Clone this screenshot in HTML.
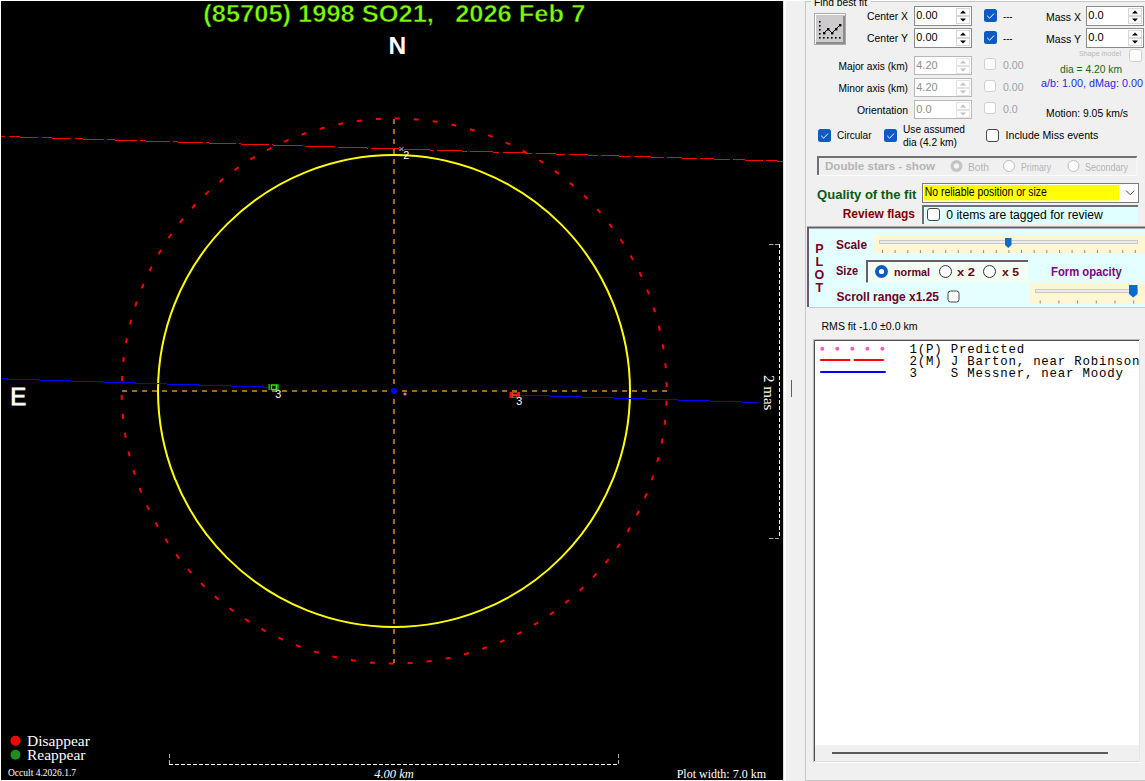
<!DOCTYPE html>
<html><head><meta charset="utf-8">
<style>
*{margin:0;padding:0;box-sizing:border-box}
html,body{width:1145px;height:781px;overflow:hidden;background:#fff;font-family:"Liberation Sans",sans-serif}
#plot{position:absolute;left:0;top:0}
#panel{position:absolute;left:783px;top:0}
</style></head><body>
<svg id="plot" width="783" height="781" viewBox="0 0 783 781"><rect x="0" y="0" width="783" height="781" fill="#fff"/>
<rect x="1" y="1" width="782" height="779" fill="#000"/>
<line x1="122" y1="391" x2="667" y2="391" stroke="#a86a08" stroke-width="2" stroke-dasharray="5 5"/>
<line x1="394" y1="119" x2="394" y2="663" stroke="#a86a08" stroke-width="2" stroke-dasharray="5 5"/>
<circle cx="394" cy="391" r="236" fill="none" stroke="#ffff00" stroke-width="2"/>
<circle cx="394.2" cy="391" r="272.5" fill="none" stroke="#ff0000" stroke-width="2" stroke-dasharray="5 14.02" stroke-dashoffset="-9.9"/>
<line x1="1" y1="136.4" x2="783" y2="161.2" stroke="#ff0000" stroke-width="1" shape-rendering="crispEdges" stroke-dasharray="29.75 3.2" stroke-dashoffset="25.25"/>
<line x1="1" y1="378.80" x2="268.5" y2="387.17" stroke="#0000ff" stroke-width="1" shape-rendering="crispEdges"/>
<line x1="520" y1="395.05" x2="758" y2="402.50" stroke="#0000ff" stroke-width="1" shape-rendering="crispEdges"/>
<g><rect x="268.3" y="384" width="1.8" height="6" fill="#1a9a1a"/><rect x="277" y="384" width="1.8" height="6" fill="#1a9a1a"/><rect x="271.5" y="385" width="4.8" height="4.5" fill="none" stroke="#22ee22" stroke-width="1.4"/></g>
<g><rect x="509.5" y="392" width="2.6" height="6" fill="#ff1010"/><rect x="517.6" y="392" width="2.4" height="6" fill="#ff1010"/><rect x="512" y="394" width="5.6" height="2.2" fill="#ff2020"/><rect x="512.5" y="392.6" width="4.5" height="5" fill="none" stroke="#c05030" stroke-width="0.8"/></g>
<text x="275.2" y="398.4" font-size="10.8" fill="#fff" font-family="Liberation Sans" style="white-space:pre" >3</text>
<text x="516.2" y="405.3" font-size="10.8" fill="#fff" font-family="Liberation Sans" style="white-space:pre" >3</text>
<text x="403.2" y="159.4" font-size="10.8" fill="#fff" font-family="Liberation Sans" style="white-space:pre" >2</text>
<path d="M399.5 147 L403.5 151 M403.5 147 L399.5 151" stroke="#b8b8b8" stroke-width="1"/>
<circle cx="394" cy="391" r="3" fill="#0000ff"/>
<circle cx="405" cy="394" r="1.6" fill="#ff60c0"/>
<text x="203.3" y="21.8" font-size="24" fill="#7cfc00" font-family="Liberation Sans" font-weight="bold" textLength="382" lengthAdjust="spacingAndGlyphs" style="white-space:pre" stroke="#000" stroke-width="0.5">(85705) 1998 SO21,   2026 Feb 7</text>
<text x="397.3" y="53.8" font-size="24.5" fill="#fff" font-family="Liberation Sans" font-weight="bold" text-anchor="middle" style="white-space:pre" >N</text>
<text x="10.2" y="405" font-size="24" fill="#fff" font-family="Liberation Sans" style="white-space:pre" stroke="#fff" stroke-width="0.8">E</text>
<line x1="779.5" y1="244" x2="779.5" y2="538" stroke="#fff" stroke-width="1" stroke-dasharray="4 2"/>
<line x1="769" y1="244.5" x2="779" y2="244.5" stroke="#b0a8b0" stroke-width="1" stroke-dasharray="4.5 1.5"/>
<line x1="769" y1="538.5" x2="779" y2="538.5" stroke="#b0a8b0" stroke-width="1" stroke-dasharray="4.5 1.5"/>
<g transform="translate(764,375) rotate(90)"><text x="0" y="0" font-size="15" fill="#fff" font-family="Liberation Serif" style="white-space:pre" >2 mas</text></g>
<line x1="169" y1="764.5" x2="619" y2="764.5" stroke="#fff" stroke-width="1" stroke-dasharray="4 2"/>
<line x1="169.5" y1="754" x2="169.5" y2="764" stroke="#b0a8b0" stroke-width="1" stroke-dasharray="4 2"/>
<line x1="618.5" y1="754" x2="618.5" y2="764" stroke="#b0a8b0" stroke-width="1" stroke-dasharray="4 2"/>
<text x="394" y="777.7" font-size="12.5" fill="#fff" font-family="Liberation Serif" font-style="italic" text-anchor="middle" style="white-space:pre" >4.00 km</text>
<text x="766" y="777.8" font-size="12" fill="#fff" font-family="Liberation Serif" text-anchor="end" style="white-space:pre" >Plot width: 7.0 km</text>
<text x="8" y="775.5" font-size="10" fill="#fff" font-family="Liberation Serif" textLength="68" lengthAdjust="spacingAndGlyphs" style="white-space:pre" >Occult 4.2026.1.7</text>
<circle cx="15.5" cy="740.7" r="5" fill="#ff0000"/>
<circle cx="15.5" cy="754.7" r="5" fill="#1e8c1e"/>
<text x="27" y="745.7" font-size="15.5" fill="#fff" font-family="Liberation Serif" style="white-space:pre" >Disappear</text>
<text x="27" y="759.7" font-size="15.5" fill="#fff" font-family="Liberation Serif" style="white-space:pre" >Reappear</text></svg>
<svg id="panel" width="362" height="781" viewBox="783 0 362 781"><rect x="783" y="0" width="362" height="781" fill="#f0f0f0"/>
<rect x="783" y="0" width="1" height="781" fill="#dcdcdc"/>
<rect x="784" y="0" width="2" height="781" fill="#ffffff"/>
<rect x="783" y="0" width="362" height="1" fill="#ffffff"/>
<rect x="791" y="380" width="1" height="17" fill="#606060"/>
<rect x="805" y="1" width="1" height="780" fill="#c4c8c4"/>
<rect x="805" y="1" width="340" height="1" fill="#c4c8c4"/>
<rect x="805" y="780" width="340" height="1" fill="#c4c8c4"/>
<rect x="811" y="0" width="60" height="6" fill="#f0f0f0"/>
<text x="814" y="5.6" font-size="11" fill="#000" font-family="Liberation Sans" textLength="53" lengthAdjust="spacingAndGlyphs" style="white-space:pre" >Find best fit</text>
<rect x="814" y="13" width="32" height="32" fill="#a8aca8"/>
<rect x="815" y="14" width="30" height="30" fill="#ffffff"/>
<rect x="816" y="15.5" width="29" height="28.5" fill="#8c8c8c"/>
<rect x="816" y="15.5" width="27" height="26.5" fill="#cdcbcd"/>
<g fill="#000"><rect x="819" y="21" width="1.6" height="1.6"/><rect x="819" y="25" width="1.6" height="1.6"/><rect x="819" y="29" width="1.6" height="1.6"/><rect x="819" y="33" width="1.6" height="1.6"/><rect x="819" y="37" width="1.6" height="1.6"/><rect x="823" y="37" width="1.6" height="1.6"/><rect x="827" y="37" width="1.6" height="1.6"/><rect x="831" y="37" width="1.6" height="1.6"/><rect x="835" y="37" width="1.6" height="1.6"/><rect x="839" y="37" width="1.6" height="1.6"/><rect x="823" y="32" width="2.4" height="2.4"/><rect x="827" y="28" width="2.4" height="2.4"/><rect x="831" y="32" width="2.4" height="2.4"/><rect x="835" y="28" width="2.4" height="2.4"/><rect x="839" y="24" width="2.4" height="2.4"/></g>
<path d="M824 33 L828 29 L832 33 L836 29 L840 25" stroke="#000" stroke-width="1" fill="none"/>
<text x="908" y="20.4" font-size="11" fill="#000" font-family="Liberation Sans" text-anchor="end" textLength="41" lengthAdjust="spacingAndGlyphs" style="white-space:pre" >Center X</text>
<text x="908" y="42.4" font-size="11" fill="#000" font-family="Liberation Sans" text-anchor="end" textLength="41" lengthAdjust="spacingAndGlyphs" style="white-space:pre" >Center Y</text>
<text x="908" y="70.2" font-size="11" fill="#000" font-family="Liberation Sans" text-anchor="end" textLength="69.5" lengthAdjust="spacingAndGlyphs" style="white-space:pre" >Major axis (km)</text>
<text x="908" y="91.9" font-size="11" fill="#000" font-family="Liberation Sans" text-anchor="end" textLength="69.5" lengthAdjust="spacingAndGlyphs" style="white-space:pre" >Minor axis (km)</text>
<text x="908" y="113.8" font-size="11" fill="#000" font-family="Liberation Sans" text-anchor="end" textLength="51" lengthAdjust="spacingAndGlyphs" style="white-space:pre" >Orientation</text>
<rect x="914.5" y="6.5" width="57" height="19" fill="#fff" stroke="#8a8a8a"/>
<text x="916.3" y="18.8" font-size="11.5" fill="#000" font-family="Liberation Sans" textLength="21.2" lengthAdjust="spacingAndGlyphs" style="white-space:pre" >0.00</text>
<rect x="956.5" y="8.5" width="13" height="7" fill="#fff" stroke="#d8d8d8"/>
<rect x="956.5" y="16.5" width="13" height="7" fill="#fff" stroke="#d8d8d8"/>
<path d="M960 13.5 L963 10.5 L966 13.5 Z" fill="#000"/>
<path d="M960 18.5 L963 21.5 L966 18.5 Z" fill="#000"/>
<rect x="914.5" y="28.5" width="57" height="19" fill="#fff" stroke="#8a8a8a"/>
<text x="916.3" y="40.8" font-size="11.5" fill="#000" font-family="Liberation Sans" textLength="21.2" lengthAdjust="spacingAndGlyphs" style="white-space:pre" >0.00</text>
<rect x="956.5" y="30.5" width="13" height="7" fill="#fff" stroke="#d8d8d8"/>
<rect x="956.5" y="38.5" width="13" height="7" fill="#fff" stroke="#d8d8d8"/>
<path d="M960 35.5 L963 32.5 L966 35.5 Z" fill="#000"/>
<path d="M960 40.5 L963 43.5 L966 40.5 Z" fill="#000"/>
<rect x="914.5" y="56.5" width="57" height="18" fill="#fff" stroke="#b8b8b8"/>
<text x="916.3" y="68.8" font-size="11.5" fill="#8c8c8c" font-family="Liberation Sans" textLength="21.2" lengthAdjust="spacingAndGlyphs" style="white-space:pre" >4.20</text>
<rect x="956.5" y="58.5" width="13" height="7" fill="#fff" stroke="#e4e4e4"/>
<rect x="956.5" y="66.5" width="13" height="7" fill="#fff" stroke="#e4e4e4"/>
<path d="M960 63.5 L963 60.5 L966 63.5 Z" fill="#c0c0c0"/>
<path d="M960 68.5 L963 71.5 L966 68.5 Z" fill="#c0c0c0"/>
<rect x="914.5" y="78.5" width="57" height="18" fill="#fff" stroke="#b8b8b8"/>
<text x="916.3" y="90.8" font-size="11.5" fill="#8c8c8c" font-family="Liberation Sans" textLength="21.2" lengthAdjust="spacingAndGlyphs" style="white-space:pre" >4.20</text>
<rect x="956.5" y="80.5" width="13" height="7" fill="#fff" stroke="#e4e4e4"/>
<rect x="956.5" y="88.5" width="13" height="7" fill="#fff" stroke="#e4e4e4"/>
<path d="M960 85.5 L963 82.5 L966 85.5 Z" fill="#c0c0c0"/>
<path d="M960 90.5 L963 93.5 L966 90.5 Z" fill="#c0c0c0"/>
<rect x="914.5" y="100.5" width="57" height="18" fill="#fff" stroke="#b8b8b8"/>
<text x="916.3" y="112.8" font-size="11.5" fill="#8c8c8c" font-family="Liberation Sans" textLength="15.4" lengthAdjust="spacingAndGlyphs" style="white-space:pre" >0.0</text>
<rect x="956.5" y="102.5" width="13" height="7" fill="#fff" stroke="#e4e4e4"/>
<rect x="956.5" y="110.5" width="13" height="7" fill="#fff" stroke="#e4e4e4"/>
<path d="M960 107.5 L963 104.5 L966 107.5 Z" fill="#c0c0c0"/>
<path d="M960 112.5 L963 115.5 L966 112.5 Z" fill="#c0c0c0"/>
<rect x="984" y="9" width="13" height="13" rx="2.5" fill="#0d5bc2"/>
<path d="M987.2 15.8 L989.6 18.2 L994 13.6" stroke="#fff" stroke-width="1" fill="none"/>
<rect x="984" y="31" width="13" height="13" rx="2.5" fill="#0d5bc2"/>
<path d="M987.2 37.8 L989.6 40.2 L994 35.6" stroke="#fff" stroke-width="1" fill="none"/>
<text x="1003" y="19.5" font-size="11" fill="#000" font-family="Liberation Sans" textLength="9.5" lengthAdjust="spacingAndGlyphs" style="white-space:pre" >---</text>
<text x="1003" y="41.5" font-size="11" fill="#000" font-family="Liberation Sans" textLength="9.5" lengthAdjust="spacingAndGlyphs" style="white-space:pre" >---</text>
<rect x="984.5" y="58.5" width="11" height="11" rx="2.5" fill="#fff" stroke="#cfcfcf"/>
<rect x="984.5" y="80.5" width="11" height="11" rx="2.5" fill="#fff" stroke="#cfcfcf"/>
<rect x="984.5" y="102.5" width="11" height="11" rx="2.5" fill="#fff" stroke="#cfcfcf"/>
<text x="1003" y="68.6" font-size="11.5" fill="#a0a0a0" font-family="Liberation Sans" textLength="20.5" lengthAdjust="spacingAndGlyphs" style="white-space:pre" >0.00</text>
<text x="1003" y="90.6" font-size="11.5" fill="#a0a0a0" font-family="Liberation Sans" textLength="20.5" lengthAdjust="spacingAndGlyphs" style="white-space:pre" >0.00</text>
<text x="1003" y="112.6" font-size="11.5" fill="#a0a0a0" font-family="Liberation Sans" textLength="14.8" lengthAdjust="spacingAndGlyphs" style="white-space:pre" >0.0</text>
<text x="1081" y="21" font-size="11" fill="#000" font-family="Liberation Sans" text-anchor="end" textLength="35" lengthAdjust="spacingAndGlyphs" style="white-space:pre" >Mass X</text>
<text x="1081" y="43" font-size="11" fill="#000" font-family="Liberation Sans" text-anchor="end" textLength="35" lengthAdjust="spacingAndGlyphs" style="white-space:pre" >Mass Y</text>
<rect x="1086.5" y="6.5" width="57" height="19" fill="#fff" stroke="#8a8a8a"/>
<text x="1088.3" y="18.8" font-size="11.5" fill="#000" font-family="Liberation Sans" textLength="15.4" lengthAdjust="spacingAndGlyphs" style="white-space:pre" >0.0</text>
<rect x="1128.5" y="8.5" width="13" height="7" fill="#fff" stroke="#d8d8d8"/>
<rect x="1128.5" y="16.5" width="13" height="7" fill="#fff" stroke="#d8d8d8"/>
<path d="M1132 13.5 L1135 10.5 L1138 13.5 Z" fill="#000"/>
<path d="M1132 18.5 L1135 21.5 L1138 18.5 Z" fill="#000"/>
<rect x="1086.5" y="28.5" width="57" height="19" fill="#fff" stroke="#8a8a8a"/>
<text x="1088.3" y="40.8" font-size="11.5" fill="#000" font-family="Liberation Sans" textLength="15.4" lengthAdjust="spacingAndGlyphs" style="white-space:pre" >0.0</text>
<rect x="1128.5" y="30.5" width="13" height="7" fill="#fff" stroke="#d8d8d8"/>
<rect x="1128.5" y="38.5" width="13" height="7" fill="#fff" stroke="#d8d8d8"/>
<path d="M1132 35.5 L1135 32.5 L1138 35.5 Z" fill="#000"/>
<path d="M1132 40.5 L1135 43.5 L1138 40.5 Z" fill="#000"/>
<text x="1079" y="55.6" font-size="8" fill="#b8b8b8" font-family="Liberation Sans" textLength="42" lengthAdjust="spacingAndGlyphs" style="white-space:pre" >Shape model</text>
<rect x="1129.5" y="49.5" width="12" height="12" rx="2.5" fill="#fff" stroke="#cfcfcf"/>
<text x="1060" y="72.5" font-size="11" fill="#0f6a0f" font-family="Liberation Sans" textLength="62" lengthAdjust="spacingAndGlyphs" style="white-space:pre" >dia = 4.20 km</text>
<text x="1041" y="86.7" font-size="11" fill="#2828e0" font-family="Liberation Sans" textLength="102" lengthAdjust="spacingAndGlyphs" style="white-space:pre" >a/b: 1.00, dMag: 0.00</text>
<text x="1046" y="116.5" font-size="11" fill="#000" font-family="Liberation Sans" textLength="82" lengthAdjust="spacingAndGlyphs" style="white-space:pre" >Motion: 9.05 km/s</text>
<rect x="818" y="129" width="13" height="13" rx="2.5" fill="#0d5bc2"/>
<path d="M821.2 135.8 L823.6 138.2 L828 133.6" stroke="#fff" stroke-width="1" fill="none"/>
<text x="837" y="139.4" font-size="11" fill="#000" font-family="Liberation Sans" textLength="34.5" lengthAdjust="spacingAndGlyphs" style="white-space:pre" >Circular</text>
<rect x="884" y="129" width="13" height="13" rx="2.5" fill="#0d5bc2"/>
<path d="M887.2 135.8 L889.6 138.2 L894 133.6" stroke="#fff" stroke-width="1" fill="none"/>
<text x="903" y="132.6" font-size="11" fill="#000" font-family="Liberation Sans" textLength="62" lengthAdjust="spacingAndGlyphs" style="white-space:pre" >Use assumed</text>
<text x="903" y="145.7" font-size="11" fill="#000" font-family="Liberation Sans" textLength="54" lengthAdjust="spacingAndGlyphs" style="white-space:pre" >dia (4.2 km)</text>
<rect x="986.5" y="129.5" width="12" height="12" rx="2.5" fill="#fff" stroke="#464646"/>
<text x="1005.6" y="139.4" font-size="11" fill="#000" font-family="Liberation Sans" textLength="92.7" lengthAdjust="spacingAndGlyphs" style="white-space:pre" >Include Miss events</text>
<rect x="817" y="156" width="320" height="20" fill="#f0f0f0"/>
<path d="M818 175 V157 H1137" stroke="#707070" stroke-width="2" fill="none"/>
<path d="M1137 157 V175.5 H817" stroke="#fcfcfc" stroke-width="1" fill="none"/>
<text x="825" y="169.7" font-size="11.5" fill="#b4b4b4" font-family="Liberation Sans" font-weight="bold" textLength="110" lengthAdjust="spacingAndGlyphs" style="white-space:pre" >Double stars - show</text>
<circle cx="956.5" cy="166" r="6" fill="#c4c4c4"/>
<circle cx="956.5" cy="166" r="2.7" fill="#f4f4f4"/>
<text x="968" y="170.5" font-size="11" fill="#b4b4b4" font-family="Liberation Sans" textLength="21" lengthAdjust="spacingAndGlyphs" style="white-space:pre" >Both</text>
<circle cx="1009" cy="166" r="5.5" fill="#fff" stroke="#bcbcbc" stroke-width="1"/>
<text x="1021" y="170.5" font-size="11" fill="#b4b4b4" font-family="Liberation Sans" textLength="30" lengthAdjust="spacingAndGlyphs" style="white-space:pre" >Primary</text>
<circle cx="1073.5" cy="166" r="5.5" fill="#fff" stroke="#bcbcbc" stroke-width="1"/>
<text x="1085" y="170.5" font-size="11" fill="#b4b4b4" font-family="Liberation Sans" textLength="43" lengthAdjust="spacingAndGlyphs" style="white-space:pre" >Secondary</text>
<text x="817" y="198.6" font-size="12.5" fill="#0a5a14" font-family="Liberation Sans" font-weight="bold" textLength="99.4" lengthAdjust="spacingAndGlyphs" style="white-space:pre" >Quality of the fit</text>
<rect x="922.5" y="183.5" width="216" height="19" fill="#fff" stroke="#7a7a7a"/>
<rect x="924" y="185" width="195" height="15.5" fill="#ffff00"/>
<text x="924.8" y="195.8" font-size="12" fill="#000" font-family="Liberation Sans" textLength="122" lengthAdjust="spacingAndGlyphs" style="white-space:pre" >No reliable position or size</text>
<path d="M1126 190.5 L1130.2 194.7 L1134.4 190.5" stroke="#404040" stroke-width="1" fill="none"/>
<text x="915" y="218.2" font-size="12" fill="#800000" font-family="Liberation Sans" font-weight="bold" text-anchor="end" textLength="72.3" lengthAdjust="spacingAndGlyphs" style="white-space:pre" >Review flags</text>
<rect x="922" y="205" width="216" height="19" fill="#e0ffff"/>
<path d="M923 224 V206 H1138" stroke="#707070" stroke-width="2" fill="none"/>
<rect x="927.5" y="208.5" width="12" height="12" rx="2.5" fill="#ffffff" stroke="#464646"/>
<text x="946.3" y="218.6" font-size="12" fill="#000" font-family="Liberation Sans" textLength="156.5" lengthAdjust="spacingAndGlyphs" style="white-space:pre" >0 items are tagged for review</text>
<rect x="807" y="226" width="338" height="81" fill="#e4ffff"/>
<path d="M808 307 V227.5 H1145" stroke="#6a5a6a" stroke-width="2" fill="none"/>
<rect x="809" y="307" width="336" height="1" fill="#d0c8d0"/>
<text x="819.4" y="252.9" font-size="12.5" fill="#700028" font-family="Liberation Sans" font-weight="bold" text-anchor="middle" style="white-space:pre" >P</text>
<text x="819.4" y="265.93" font-size="12.5" fill="#700028" font-family="Liberation Sans" font-weight="bold" text-anchor="middle" style="white-space:pre" >L</text>
<text x="819.4" y="278.96" font-size="12.5" fill="#700028" font-family="Liberation Sans" font-weight="bold" text-anchor="middle" style="white-space:pre" >O</text>
<text x="819.4" y="291.99" font-size="12.5" fill="#700028" font-family="Liberation Sans" font-weight="bold" text-anchor="middle" style="white-space:pre" >T</text>
<text x="836" y="249" font-size="12" fill="#6a0020" font-family="Liberation Sans" font-weight="bold" textLength="31" lengthAdjust="spacingAndGlyphs" style="white-space:pre" >Scale</text>
<rect x="874" y="235" width="271" height="18.5" fill="#fff6d4"/>
<rect x="879.5" y="240.5" width="258" height="3" fill="#ececec" stroke="#c8c8c8"/>
<g fill="#a08090"><rect x="882.0" y="250" width="1" height="3"/><rect x="894.6" y="250" width="1" height="3"/><rect x="907.3" y="250" width="1" height="3"/><rect x="919.9" y="250" width="1" height="3"/><rect x="932.6" y="250" width="1" height="3"/><rect x="945.2" y="250" width="1" height="3"/><rect x="957.8" y="250" width="1" height="3"/><rect x="970.5" y="250" width="1" height="3"/><rect x="983.1" y="250" width="1" height="3"/><rect x="995.8" y="250" width="1" height="3"/><rect x="1008.4" y="250" width="1" height="3"/><rect x="1021.0" y="250" width="1" height="3"/><rect x="1033.7" y="250" width="1" height="3"/><rect x="1046.3" y="250" width="1" height="3"/><rect x="1059.0" y="250" width="1" height="3"/><rect x="1071.6" y="250" width="1" height="3"/><rect x="1084.2" y="250" width="1" height="3"/><rect x="1096.9" y="250" width="1" height="3"/><rect x="1109.5" y="250" width="1" height="3"/><rect x="1122.2" y="250" width="1" height="3"/><rect x="1134.8" y="250" width="1" height="3"/></g>
<path d="M1005 238 H1011.5 V245 L1008.25 248 L1005 245 Z" fill="#0a6ad0"/>
<text x="836" y="274.7" font-size="12" fill="#6a0020" font-family="Liberation Sans" font-weight="bold" textLength="22" lengthAdjust="spacingAndGlyphs" style="white-space:pre" >Size</text>
<rect x="866" y="260" width="162" height="22.5" fill="#f2fff2"/>
<path d="M867 282.5 V261 H1028" stroke="#6a5a6a" stroke-width="2" fill="none"/>
<circle cx="881.5" cy="271.5" r="6.5" fill="#0d5bc2"/>
<circle cx="881.5" cy="271.5" r="2.6" fill="#fff"/>
<text x="894" y="275.5" font-size="11.5" fill="#6a0020" font-family="Liberation Sans" font-weight="bold" textLength="36" lengthAdjust="spacingAndGlyphs" style="white-space:pre" >normal</text>
<circle cx="945.5" cy="271.5" r="6.0" fill="#fff" stroke="#333333"/>
<text x="957" y="275.5" font-size="11.5" fill="#6a0020" font-family="Liberation Sans" font-weight="bold" textLength="18" lengthAdjust="spacingAndGlyphs" style="white-space:pre" >x 2</text>
<circle cx="989.5" cy="271.5" r="6.0" fill="#fff" stroke="#333333"/>
<text x="1002" y="275.5" font-size="11.5" fill="#6a0020" font-family="Liberation Sans" font-weight="bold" textLength="17" lengthAdjust="spacingAndGlyphs" style="white-space:pre" >x 5</text>
<text x="1051" y="275.5" font-size="12" fill="#800080" font-family="Liberation Sans" font-weight="bold" textLength="70.7" lengthAdjust="spacingAndGlyphs" style="white-space:pre" >Form opacity</text>
<rect x="1029.5" y="283" width="115.5" height="21" fill="#fff6d4"/>
<rect x="1035.5" y="289.5" width="102" height="3" fill="#ececec" stroke="#c8c8c8"/>
<g fill="#a08090"><rect x="1039.7" y="300.5" width="1" height="3"/><rect x="1058.4" y="300.5" width="1" height="3"/><rect x="1077.1" y="300.5" width="1" height="3"/><rect x="1095.8" y="300.5" width="1" height="3"/><rect x="1114.5" y="300.5" width="1" height="3"/><rect x="1133.2" y="300.5" width="1" height="3"/></g>
<path d="M1129 285 H1137.5 V294 L1133.25 297.5 L1129 294 Z" fill="#0a6ad0"/>
<text x="836.5" y="300.6" font-size="12" fill="#6a0020" font-family="Liberation Sans" font-weight="bold" textLength="102.5" lengthAdjust="spacingAndGlyphs" style="white-space:pre" >Scroll range x1.25</text>
<rect x="948.0" y="291.0" width="11" height="11" rx="2.5" fill="#fff" stroke="#464646"/>
<text x="821.5" y="329.9" font-size="11.5" fill="#000" font-family="Liberation Sans" textLength="96" lengthAdjust="spacingAndGlyphs" style="white-space:pre" >RMS fit -1.0 ±0.0 km</text>
<rect x="813" y="339" width="327" height="423" fill="#f0f0f0"/>
<rect x="815" y="341" width="324" height="404" fill="#fff"/>
<path d="M813.5 762 V339.5 H1140" stroke="#b4bcb4" stroke-width="1" fill="none"/>
<path d="M814.5 761 V340.5 H1139" stroke="#584858" stroke-width="1" fill="none"/>
<rect x="1139" y="341" width="1" height="420" fill="#e4e8e4"/>
<rect x="832" y="752" width="276" height="2" fill="#5a5a5a"/>
<rect x="815" y="761" width="324" height="1" fill="#dadada"/>
<rect x="813" y="762" width="327" height="1" fill="#ffffff"/>
<circle cx="822.3" cy="348.7" r="2" fill="#ff5ac0"/><circle cx="837.3" cy="348.7" r="2" fill="#ff5ac0"/><circle cx="852.4" cy="348.7" r="2" fill="#ff5ac0"/><circle cx="867.4" cy="348.7" r="2" fill="#ff5ac0"/><circle cx="882.4" cy="348.7" r="2" fill="#ff5ac0"/>
<rect x="820" y="359" width="30.5" height="2" rx="1" fill="#ff0000"/><rect x="853.5" y="359" width="30.5" height="2" rx="1" fill="#ff0000"/>
<rect x="820" y="371" width="66" height="2" rx="1" fill="#0000ff"/>
<clipPath id="lc"><rect x="816" y="342" width="323" height="403"/></clipPath>
<g clip-path="url(#lc)">
<text x="909.6" y="352.7" font-size="12.4" fill="#000" font-family="Liberation Mono" style="white-space:pre" letter-spacing="0.8">1(P) Predicted</text>
<text x="909.6" y="364.9" font-size="12.4" fill="#000" font-family="Liberation Mono" style="white-space:pre" letter-spacing="0.8">2(M) J Barton, near Robinson</text>
<text x="909.6" y="376.7" font-size="12.4" fill="#000" font-family="Liberation Mono" style="white-space:pre" letter-spacing="0.8">3    S Messner, near Moody</text>
</g></svg>
</body></html>
